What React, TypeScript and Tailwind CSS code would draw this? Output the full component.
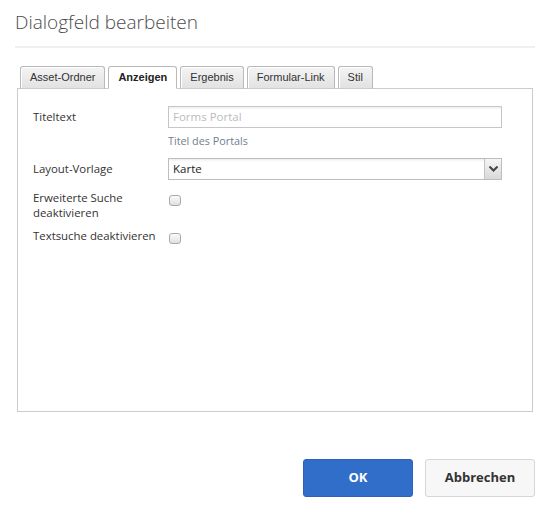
import React from 'react';

const tabs = ['Asset-Ordner', 'Anzeigen', 'Ergebnis', 'Formular-Link', 'Stil'];

export default function App() {
  return (
    <div className="relative h-[509px] w-[550px] overflow-hidden bg-white font-['Open_Sans',sans-serif] text-[#333]">
      <div className="px-[15px]">
        <h1 className="pt-[10px] text-[19px] font-light leading-6 text-[#4b4b4b]">Dialogfeld bearbeiten</h1>
        <div className="mt-[12px] h-[2px] w-[520px] bg-[#efefef]" />
      </div>

      <div className="ml-[17px] mt-[18px] w-[516px]">
        <TabRow />
        <div className="h-[324px] border border-[#cbcbcb] bg-white pl-[15px] pt-[17px]">
          <FormBody />
        </div>
      </div>

      <div className="mt-[47px] flex justify-end gap-[12px] pr-[15px]">
        <button className="h-[38px] w-[110px] rounded-[3px] border border-[#2c62b8] bg-[#316ec9] text-[13px] font-bold text-white">
          OK
        </button>
        <button className="h-[38px] w-[110px] rounded-[3px] border border-[#d6d6d6] bg-[#f7f7f7] text-[13px] font-bold text-[#333]">
          Abbrechen
        </button>
      </div>
    </div>
  );
}

function TabRow() {
  return (
    <div className="relative z-10 -mb-px flex h-[23px] items-end gap-[3px] pl-[3px] font-['Liberation_Sans',Arial,sans-serif] text-[11px]">
      {tabs.map((t) => {
        const active = t === 'Anzeigen';
        return (
          <div
            key={t}
            className={`flex h-[23px] items-center rounded-t-[3px] border border-[#b9b9b9] px-[9px] ${
              active
                ? 'border-b-white bg-white font-bold text-[#222]'
                : 'border-b-[#cbcbcb] bg-gradient-to-b from-[#f4f4f4] to-[#e2e2e2] text-[#333] shadow-[inset_1px_1px_0_#fff]'
            }`}
          >
            {t}
          </div>
        );
      })}
    </div>
  );
}

function FormBody() {
  return (
    <div className="text-[11.4px] leading-4">
      <div className="flex">
        <div className="w-[135px] pt-[3px]">Titeltext</div>
        <div>
          <div className="flex h-[22px] w-[334px] items-center border border-[#c6c6c6] bg-white px-[4px] text-[11.5px] text-[#bcbcbc] shadow-[inset_0_3px_3px_-2px_#e8e8e8]">
            Forms Portal
          </div>
          <div className="mt-[6px] text-[10.8px] leading-[14px] text-[#6f7f8f]">Titel des Portals</div>
        </div>
      </div>

      <div className="mt-[10px] flex">
        <div className="w-[135px] pt-[3px]">Layout-Vorlage</div>
        <div className="flex h-[22px] w-[334px] border border-[#bdbdbd] bg-white shadow-[inset_0_3px_3px_-2px_#e8e8e8]">
          <div className="flex flex-1 items-center px-[4px] text-[11.5px] text-[#222]">Karte</div>
          <div className="flex w-[17px] items-center justify-center border-l border-[#c4c4c4] bg-gradient-to-b from-[#f5f5f5] to-[#d9d9d9]">
            <svg width="9" height="6" viewBox="0 0 9 6">
              <path d="M0.5 0.5 L4.5 4.5 L8.5 0.5" fill="none" stroke="#444" strokeWidth="2" />
            </svg>
          </div>
        </div>
      </div>

      <div className="mt-[10px] flex">
        <div className="w-[135px] leading-[15px]">
          Erweiterte Suche
          <br />
          deaktivieren
        </div>
        <Checkbox />
      </div>

      <div className="mt-[8px] flex">
        <div className="w-[135px] leading-[15px]">Textsuche deaktivieren</div>
        <Checkbox />
      </div>
    </div>
  );
}

function Checkbox() {
  return (
    <div className="ml-[1px] mt-[5px] h-[11px] w-[12px] rounded-[3px] border border-[#a9a9a9] bg-gradient-to-b from-[#fafafa] to-[#e0e0e0]" />
  );
}
